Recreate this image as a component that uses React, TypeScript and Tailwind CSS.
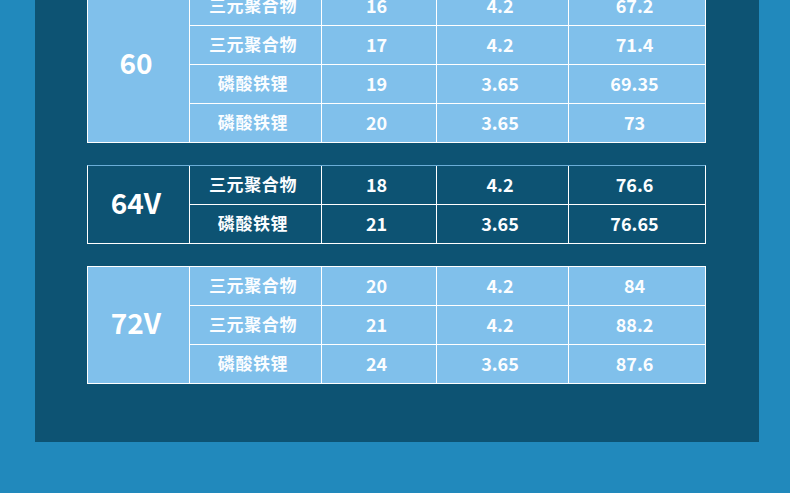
type Row = [string, string, string, string];

type Group = {
  label: string;
  dark?: boolean;
  rows: Row[];
  className?: string;
};

const groups: Group[] = [
  {
    label: "60",
    className: "-mt-[14px]",
    rows: [
      ["三元聚合物", "16", "4.2", "67.2"],
      ["三元聚合物", "17", "4.2", "71.4"],
      ["磷酸铁锂", "19", "3.65", "69.35"],
      ["磷酸铁锂", "20", "3.65", "73"],
    ],
  },
  {
    label: "64V",
    dark: true,
    className: "mt-[22px]",
    rows: [
      ["三元聚合物", "18", "4.2", "76.6"],
      ["磷酸铁锂", "21", "3.65", "76.65"],
    ],
  },
  {
    label: "72V",
    className: "mt-[22px]",
    rows: [
      ["三元聚合物", "20", "4.2", "84"],
      ["三元聚合物", "21", "4.2", "88.2"],
      ["磷酸铁锂", "24", "3.65", "87.6"],
    ],
  },
];

const font = { fontFamily: '"Noto Sans CJK SC", "Noto Sans", sans-serif' };

const cell = "flex items-center justify-center border-l border-white pb-[2px] pr-[5px] font-bold";

function SpecTable({ group }: { group: Group }) {
  const bg = group.dark ? "bg-[#0d5373]" : "bg-[#80c0eb]";
  const topBorder = group.dark ? "border-t-[#6aaed8]" : "border-t-white";
  return (
    <div
      className={`flex w-[619px] border border-white ${topBorder} ${bg} ${group.className ?? ""}`}
    >
      <div className="flex w-[101px] shrink-0 items-center justify-center pb-[6px] pr-[5px] text-[28px] font-bold text-white">
        {group.label}
      </div>
      <div className="flex flex-1 flex-col">
        {group.rows.map((r, i) => (
          <div
            key={i}
            className={`grid grid-cols-[132px_115px_132px_1fr] text-[#fbfdff] ${i > 0 ? "h-[39px] border-t border-white" : "h-[38px]"}`}
          >
            <div className={`${cell} text-[17px] tracking-[0.6px]`}>{r[0]}</div>
            <div className={`${cell} text-[18px]`}>{r[1]}</div>
            <div className={`${cell} text-[18px]`}>{r[2]}</div>
            <div className={`${cell} text-[18px]`}>{r[3]}</div>
          </div>
        ))}
      </div>
    </div>
  );
}

export default function App() {
  return (
    <div className="h-[493px] w-[790px] bg-[#2189bc]" style={font}>
      <div className="ml-[35px] flex h-[442px] w-[724px] flex-col overflow-hidden bg-[#0d5373] pl-[52px]">
        {groups.map((g) => (
          <SpecTable key={g.label} group={g} />
        ))}
      </div>
    </div>
  );
}
